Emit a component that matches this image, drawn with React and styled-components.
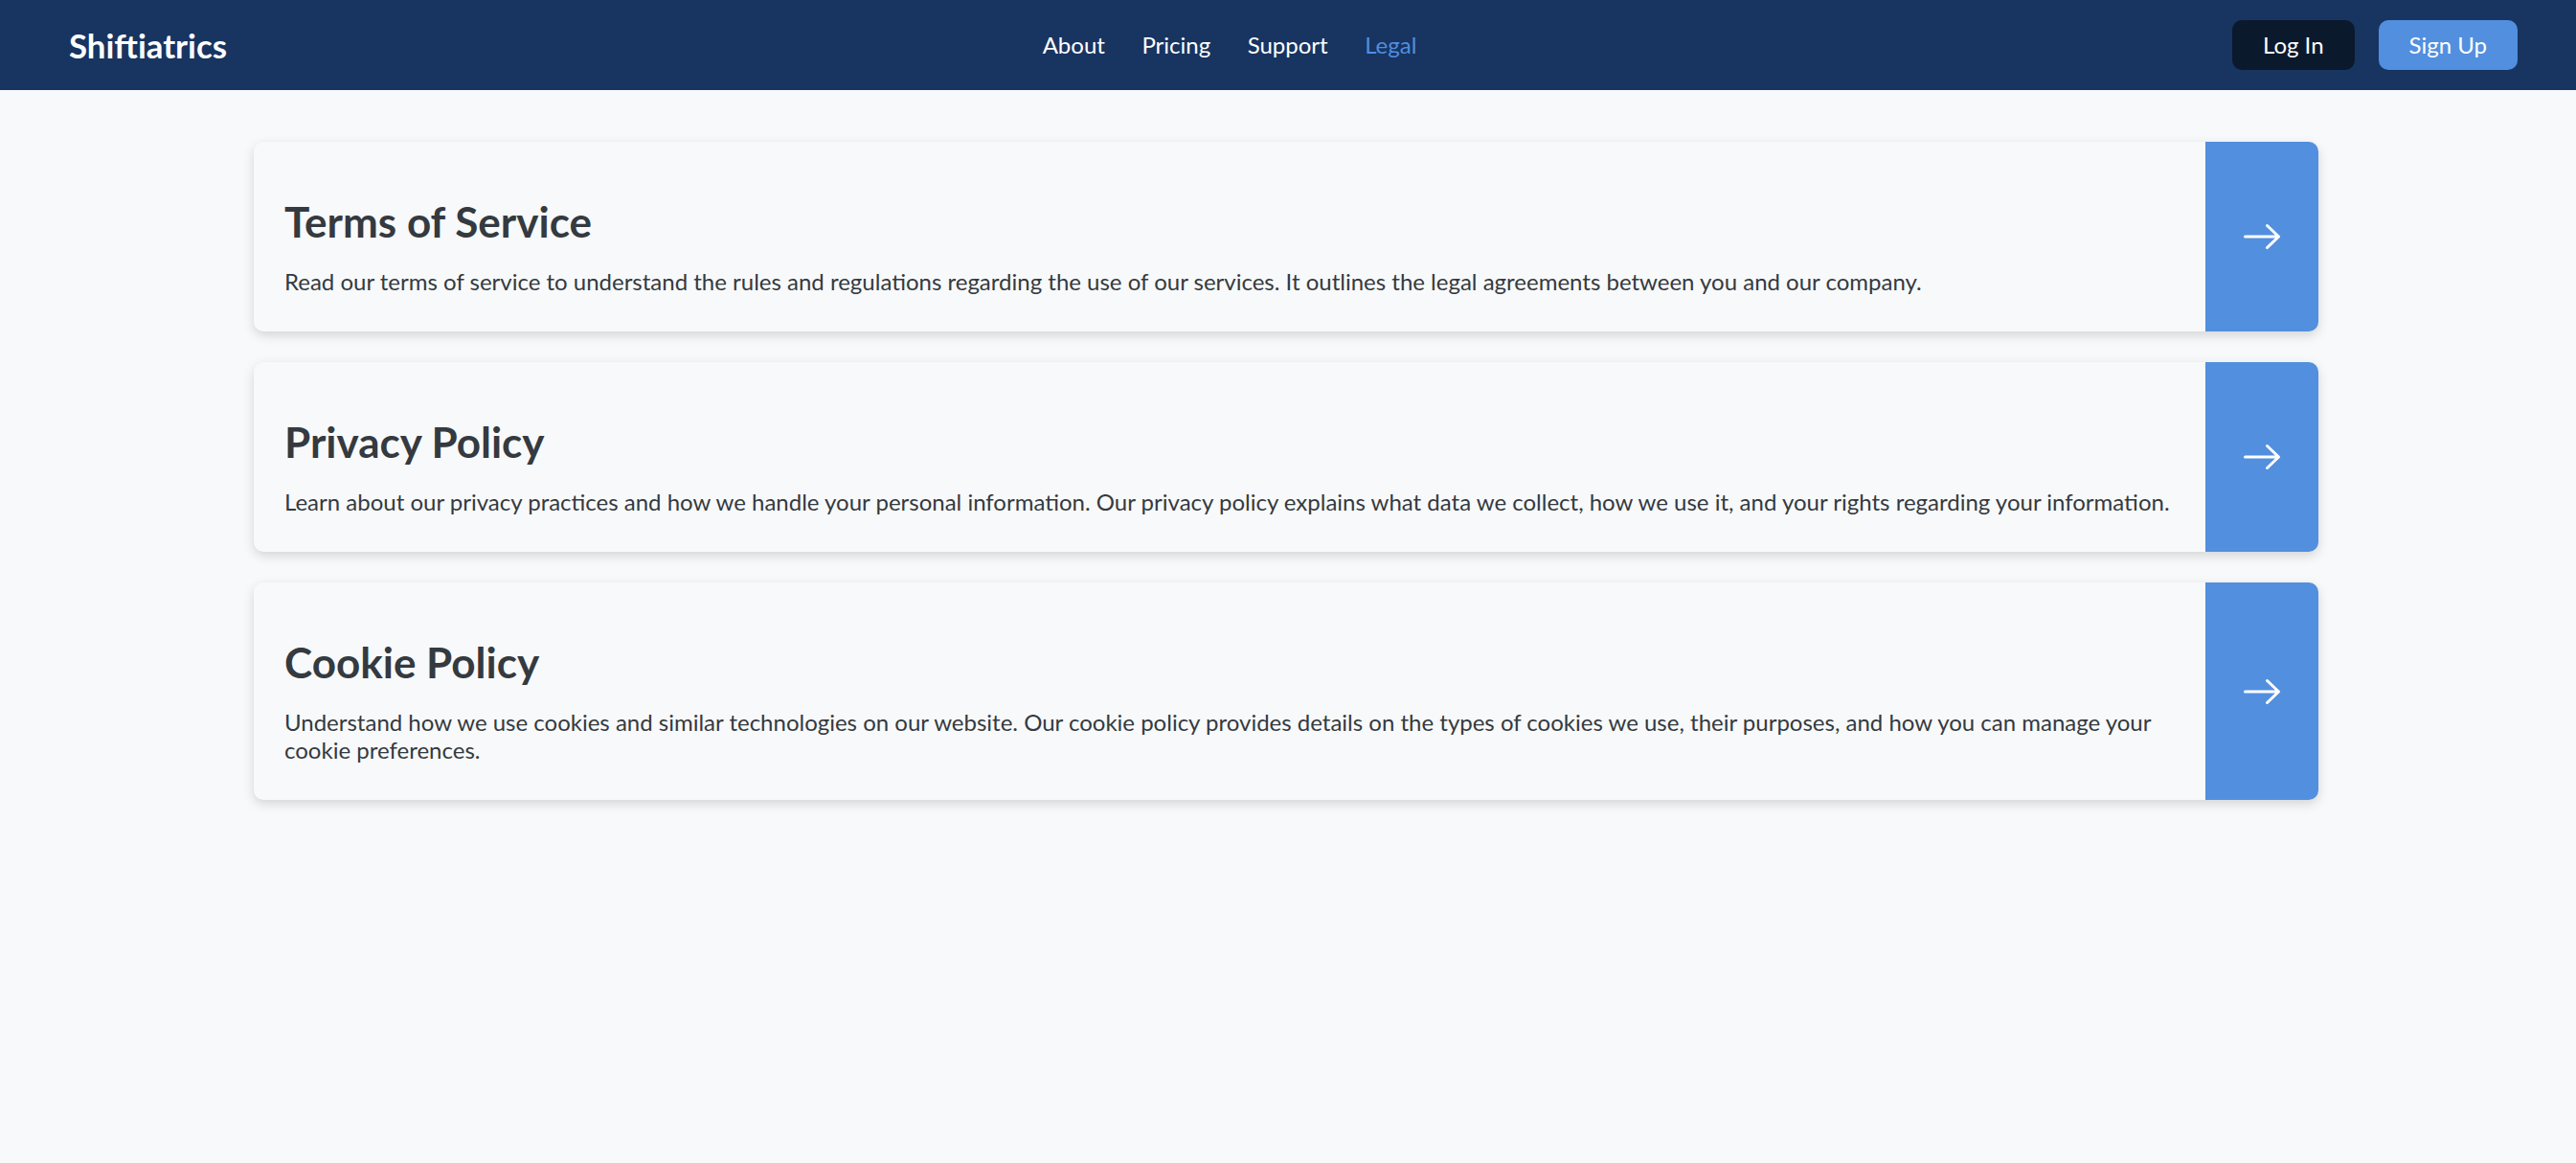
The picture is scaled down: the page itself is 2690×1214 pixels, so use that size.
import React from 'react'
import styled, { createGlobalStyle } from 'styled-components'

const GlobalStyle = createGlobalStyle`
  html, body {
    margin: 0;
    padding: 0;
    background: #f8f9fa;
    font-family: Lato, 'Liberation Sans', sans-serif;
  }
`

const Page = styled.div`
  min-height: 1214px;
  background: #f8f9fa;
`

const NavBar = styled.nav`
  height: 94px;
  display: flex;
  align-items: center;
  justify-content: space-between;
  padding: 0 61px 0 72px;
  background: #183461;
  box-sizing: border-box;
`

const Logo = styled.div`
  color: #ffffff;
  font-size: 34.8px;
  font-weight: 700;
`

const NavLinks = styled.div`
  display: flex;
  gap: 38.5px;
  margin-bottom: 2px;
`

const NavLink = styled.a`
  font-size: 24px;
  color: ${p => (p.$active ? '#4f8ee0' : '#ffffff')};
  text-decoration: none;
  cursor: pointer;
`

const Actions = styled.div`
  display: flex;
  gap: 25px;
`

const Button = styled.button`
  font-family: inherit;
  font-size: 24px;
  line-height: 1.2;
  padding: 12px 32px;
  border: none;
  border-radius: 10px;
  color: #ffffff;
  background: ${p => (p.$primary ? '#528fdf' : '#0b192d')};
  cursor: pointer;
`

const Main = styled.main`
  display: flex;
  flex-direction: column;
  gap: 32px;
  padding: 54px 269px 0 265px;
`

const Card = styled.div`
  display: flex;
  border-radius: 10px;
  background: #f8f9fa;
  box-shadow: 0 4px 12px rgba(0, 0, 0, 0.15);
`

const CardBody = styled.div`
  flex: 1;
  padding: 57px 32px 37px;
`

const Title = styled.h2`
  margin: 0 0 22.5px;
  font-size: 44px;
  line-height: 1.2;
  font-weight: 700;
  color: #343a40;
`

const Text = styled.p`
  margin: 0;
  font-size: 24px;
  line-height: 1.2;
  color: #343a40;
`

const ArrowPanel = styled.div`
  width: 118px;
  flex-shrink: 0;
  display: flex;
  align-items: center;
  justify-content: center;
  background: #528fdf;
  border-radius: 0 10px 10px 0;
  cursor: pointer;
`

const Arrow = () => (
  <svg width="40" height="28" viewBox="0 0 40 28" fill="none">
    <path
      d="M2.5 14H37.5M25.5 2.5L37.5 14L25.5 25.5"
      stroke="#ffffff"
      strokeWidth="3"
      strokeLinecap="round"
      strokeLinejoin="round"
    />
  </svg>
)

const policies = [
  {
    title: 'Terms of Service',
    text: 'Read our terms of service to understand the rules and regulations regarding the use of our services. It outlines the legal agreements between you and our company.'
  },
  {
    title: 'Privacy Policy',
    text: 'Learn about our privacy practices and how we handle your personal information. Our privacy policy explains what data we collect, how we use it, and your rights regarding your information.'
  },
  {
    title: 'Cookie Policy',
    text: 'Understand how we use cookies and similar technologies on our website. Our cookie policy provides details on the types of cookies we use, their purposes, and how you can manage your cookie preferences.'
  }
]

const App = () => {
  return (
    <Page>
      <GlobalStyle />
      <NavBar>
        <Logo>Shiftiatrics</Logo>
        <NavLinks>
          <NavLink>About</NavLink>
          <NavLink>Pricing</NavLink>
          <NavLink>Support</NavLink>
          <NavLink $active>Legal</NavLink>
        </NavLinks>
        <Actions>
          <Button>Log In</Button>
          <Button $primary>Sign Up</Button>
        </Actions>
      </NavBar>
      <Main>
        {policies.map(p => (
          <Card key={p.title}>
            <CardBody>
              <Title>{p.title}</Title>
              <Text>{p.text}</Text>
            </CardBody>
            <ArrowPanel>
              <Arrow />
            </ArrowPanel>
          </Card>
        ))}
      </Main>
    </Page>
  )
}

export default App
